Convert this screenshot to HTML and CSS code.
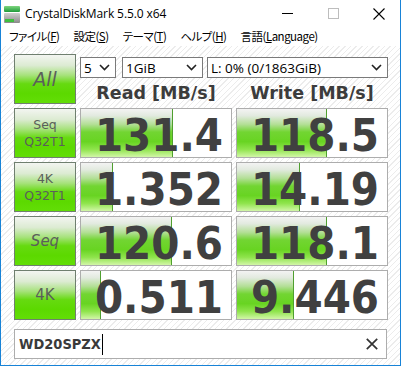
FILE: index.html
```html
<!DOCTYPE html>
<html lang="ja">
<head>
<meta charset="utf-8">
<title>CrystalDiskMark 5.5.0 x64</title>
<link rel="stylesheet" href="styles.css">
</head>
<body>
<div class="window">
  <div class="titlebar">
    <svg class="app-icon" width="16" height="17" viewBox="0 0 16 17">
      <defs>
        <linearGradient id="ig" x1="0" y1="0" x2="0" y2="1">
          <stop offset="0" stop-color="#7fd67f"/>
          <stop offset="1" stop-color="#1f9a3a"/>
        </linearGradient>
        <linearGradient id="gg" x1="0" y1="0" x2="0" y2="1">
          <stop offset="0" stop-color="#d0d0d0"/>
          <stop offset="1" stop-color="#8a8a8a"/>
        </linearGradient>
      </defs>
      <rect x="0" y="0" width="16" height="6" rx="1" fill="url(#ig)"/>
      <rect x="0" y="7" width="16" height="10" rx="1" fill="url(#gg)"/>
      <rect x="1" y="13" width="9" height="3" fill="#3fbf3f"/>
    </svg>
    <span class="title">CrystalDiskMark 5.5.0 x64</span>
    <div class="controls">
      <div class="ctl"><svg width="11" height="11" viewBox="0 0 11 11"><line x1="0" y1="5.5" x2="11" y2="5.5" stroke="#000" stroke-width="1"/></svg></div>
      <div class="ctl"><svg width="11" height="11" viewBox="0 0 11 11"><rect x="0.5" y="0.5" width="10" height="10" fill="none" stroke="#bdbdbd" stroke-width="1"/></svg></div>
      <div class="ctl"><svg width="12" height="12" viewBox="0 0 12 12"><path d="M0.5 0.5 L11.5 11.5 M11.5 0.5 L0.5 11.5" stroke="#000" stroke-width="1.1"/></svg></div>
    </div>
  </div>
  <div class="menubar">
    <span class="menu-item">ファイル(<u>F</u>)</span>
    <span class="menu-item">設定(<u>S</u>)</span>
    <span class="menu-item">テーマ(<u>T</u>)</span>
    <span class="menu-item">ヘルプ(<u>H</u>)</span>
    <span class="menu-item">言語(<u>L</u>anguage)</span>
  </div>
  <div class="content">
    <div class="grid">
      <div class="btn btn-all"><span>All</span></div>
      <div class="top-right">
        <div class="selects">
          <div class="combo combo-count"><span>5</span><svg class="chev" width="11" height="7" viewBox="0 0 11 7"><path d="M1 1 L5.5 5.5 L10 1" fill="none" stroke="#222" stroke-width="1.6"/></svg></div>
          <div class="combo combo-size"><span>1GiB</span><svg class="chev" width="11" height="7" viewBox="0 0 11 7"><path d="M1 1 L5.5 5.5 L10 1" fill="none" stroke="#222" stroke-width="1.6"/></svg></div>
          <div class="combo combo-drive"><span>L: 0% (0/1863GiB)</span><svg class="chev" width="11" height="7" viewBox="0 0 11 7"><path d="M1 1 L5.5 5.5 L10 1" fill="none" stroke="#222" stroke-width="1.6"/></svg></div>
        </div>
        <div class="headers">
          <div class="head">Read [MB/s]</div>
          <div class="head">Write [MB/s]</div>
        </div>
      </div>

      <div class="btn btn-small"><span>Seq<br>Q32T1</span></div>
      <div class="cell" style="--w:92px"><span class="val">131.4</span></div>
      <div class="cell" style="--w:90px"><span class="val">118.5</span></div>

      <div class="btn btn-small"><span>4K<br>Q32T1</span></div>
      <div class="cell" style="--w:32px"><span class="val">1.352</span></div>
      <div class="cell" style="--w:63px"><span class="val">14.19</span></div>

      <div class="btn btn-single btn-italic"><span>Seq</span></div>
      <div class="cell" style="--w:91px"><span class="val">120.6</span></div>
      <div class="cell" style="--w:90px"><span class="val">118.1</span></div>

      <div class="btn btn-single"><span>4K</span></div>
      <div class="cell" style="--w:20px"><span class="val">0.511</span></div>
      <div class="cell" style="--w:57px"><span class="val">9.446</span></div>
    </div>
    <div class="drive-input">
      <span class="drive-text">WD20SPZX</span><span class="caret"></span>
      <svg class="clear" width="12" height="12" viewBox="0 0 12 12"><path d="M0.8 0.8 L11.2 11.2 M11.2 0.8 L0.8 11.2" stroke="#333" stroke-width="1.7"/></svg>
    </div>
  </div>
</div>
</body>
</html>
```
FILE: styles.css
```css
html, body {
  margin: 0;
  padding: 0;
  background: #fff;
}
.window {
  width: 401px;
  height: 366px;
  box-sizing: border-box;
  border: 1px solid #1883d7;
  border-top: none;
  display: flex;
  flex-direction: column;
  background: #fff;
  font-family: "Noto Sans", "Noto Sans CJK JP", sans-serif;
}
.titlebar {
  height: 27px;
  display: flex;
  align-items: center;
  flex: none;
}
.app-icon {
  margin-left: 3px;
  margin-right: 5px;
  margin-top: 1px;
}
.title {
  font-family: "Open Sans", "Noto Sans", sans-serif;
  font-size: 12px;
  color: #000;
  letter-spacing: -0.1px;
}
.controls {
  margin-left: auto;
  display: flex;
  height: 100%;
}
.ctl {
  width: 46px;
  height: 27px;
  display: flex;
  align-items: center;
  justify-content: center;
}
.ctl:last-child {
  width: 44px;
  justify-content: flex-start;
  padding-left: 17px;
  box-sizing: border-box;
}
.menubar {
  height: 19px;
  display: flex;
  align-items: center;
  flex: none;
  padding-left: 1px;
}
.menu-item {
  font-family: "Noto Sans CJK JP", "Noto Sans", sans-serif;
  font-feature-settings: "palt" 1;
  font-size: 11.5px;
  letter-spacing: -0.5px;
  line-height: 19px;
  padding: 0 7px;
  color: #000;
}
.menu-item u {
  text-underline-offset: 1px;
}
.content {
  flex: 1;
  padding: 8px 13px 0 13px;
  background-color: #fff;
  background-image: repeating-linear-gradient(135deg, #fff 0 3px, #ececec 3px 4px);
}
.grid {
  display: grid;
  grid-template-columns: 62px 152px 152px;
  grid-auto-rows: 50px;
  gap: 4px;
}
.btn {
  box-sizing: border-box;
  border: 1px solid #6f7f6f;
  background: linear-gradient(to bottom, #f3f5f1 0%, #dcebd2 22%, #a7e27c 42%, #66da10 60%, #5cd900 80%, #62de06 100%);
  display: flex;
  align-items: center;
  justify-content: center;
  text-align: center;
  color: #5a605a;
  font-family: "DejaVu Sans", sans-serif;
}
.btn-all {
  font-size: 19px;
  font-style: italic;
}
.btn-small {
  font-size: 12.5px;
  line-height: 17px;
}
.btn-single {
  font-size: 15px;
}
.btn-italic {
  font-style: italic;
}
.top-right {
  grid-column: 2 / 4;
  display: flex;
  flex-direction: column;
}
.selects {
  display: flex;
  margin-top: 3px;
  height: 21px;
}
.combo {
  box-sizing: border-box;
  height: 21px;
  border: 1px solid #7a7a7a;
  background: #fff;
  display: flex;
  align-items: center;
  padding-left: 3px;
  padding-right: 5px;
  font-family: "Open Sans", "Noto Sans", sans-serif;
  font-size: 13.5px;
  color: #000;
}
.combo span { flex: 1; }
.combo-count { width: 36px; }
.combo-size { width: 81px; margin-left: 6px; }
.combo-drive { width: 181px; margin-left: 4px; }
.headers {
  flex: 1;
  display: grid;
  grid-template-columns: 152px 152px;
  gap: 4px;
  align-items: end;
}
.head {
  text-align: center;
  font-family: "DejaVu Sans", sans-serif;
  font-weight: bold;
  font-size: 17.5px;
  line-height: 20px;
  color: #3c3c3c;
  padding-bottom: 1px;
}
.cell {
  box-sizing: border-box;
  border: 1px solid #adadad;
  background-color: #fff;
  background-image:
    linear-gradient(#4f9f2f, #4f9f2f),
    linear-gradient(to bottom, #f3f3f3 0%, #e2eadf 14%, #b3df96 32%, #72d532 48%, #68d422 68%, #8fe44c 84%, #d2f6a8 100%);
  background-repeat: no-repeat;
  background-size: 1px 100%, var(--w) 100%;
  background-position: calc(var(--w) - 1px) 0, 0 0;
  display: flex;
  align-items: center;
  justify-content: flex-end;
  padding-right: 8px;
}
.val {
  font-family: "DejaVu Sans Condensed", "DejaVu Sans", sans-serif;
  font-weight: bold;
  font-size: 45px;
  line-height: 1;
  color: #404040;
  margin-top: 4px;
}
.drive-input {
  margin-top: 9px;
  height: 30px;
  box-sizing: border-box;
  border: 1px solid #adadad;
  background: #fff;
  display: flex;
  align-items: center;
  padding-left: 4px;
  padding-right: 8px;
}
.drive-text {
  font-family: "DejaVu Sans Condensed", "DejaVu Sans", sans-serif;
  font-weight: bold;
  font-size: 14.5px;
  color: #3a3a3a;
}
.caret {
  width: 1px;
  height: 21px;
  background: #000;
  margin-left: 1px;
}
.clear {
  margin-left: auto;
}
```
